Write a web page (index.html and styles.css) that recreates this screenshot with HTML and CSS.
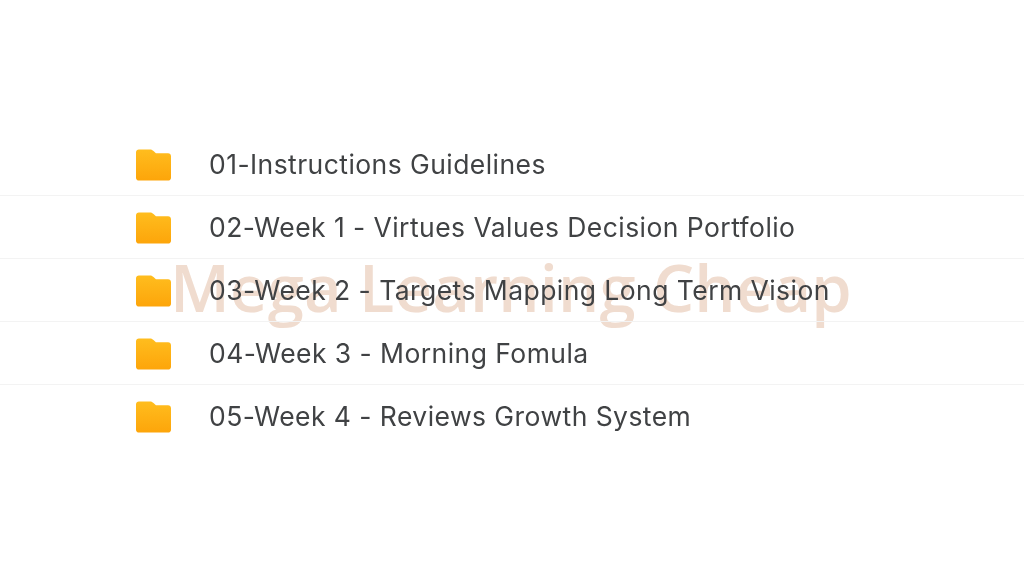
FILE: index.html
```html
<!DOCTYPE html>
<html lang="en">
<head>
<meta charset="utf-8">
<title>Folders</title>
<link rel="stylesheet" href="styles.css">
</head>
<body>
<main class="page">
  <div class="watermark">Mega Learning Cheap</div>
  <ul class="list">
    <li class="row"><svg class="folder" viewBox="0 0 36 32"><use href="#f"/></svg><span class="name">01-Instructions Guidelines</span></li>
    <li class="row"><svg class="folder" viewBox="0 0 36 32"><use href="#f"/></svg><span class="name">02-Week 1 - Virtues Values Decision Portfolio</span></li>
    <li class="row"><svg class="folder" viewBox="0 0 36 32"><use href="#f"/></svg><span class="name">03-Week 2 - Targets Mapping Long Term Vision</span></li>
    <li class="row"><svg class="folder" viewBox="0 0 36 32"><use href="#f"/></svg><span class="name">04-Week 3 - Morning Fomula</span></li>
    <li class="row"><svg class="folder" viewBox="0 0 36 32"><use href="#f"/></svg><span class="name">05-Week 4 - Reviews Growth System</span></li>
  </ul>
  <svg class="defs" width="0" height="0">
    <defs>
      <linearGradient id="g" x1="0" y1="0" x2="0" y2="1">
        <stop offset="0" stop-color="#ffbd1e"/>
        <stop offset="1" stop-color="#fda50a"/>
      </linearGradient>
      <path id="f" fill="url(#g)" d="M3 0H14.500C16 0 17 .6 18 1.600L20.500 4H33C34.700 4 36 5.300 36 7V29C36 30.700 34.700 32 33 32H3C1.300 32 0 30.700 0 29V3C0 1.300 1.300 0 3 0Z"/>
    </defs>
  </svg>
</main>
</body>
</html>
```
FILE: styles.css
```css
html, body {
  margin: 0;
  padding: 0;
  background: #fff;
}
.page {
  position: relative;
  width: 1024px;
  height: 576px;
  overflow: hidden;
  padding-top: 133px;
  box-sizing: border-box;
  font-family: Inter, "Liberation Sans", sans-serif;
}
.list {
  list-style: none;
  margin: 0;
  padding: 0;
  filter: blur(0.6px);
}
.row {
  display: flex;
  align-items: center;
  gap: 38px;
  height: 62px;
  padding-left: 136px;
  border-bottom: 1px solid #f3f3f3;
}
.row:last-child {
  border-bottom: 0;
}
.folder {
  width: 35px;
  height: 32px;
  flex: none;
  margin-top: 2px;
}
.name {
  font-size: 26.500px;
  color: #404244;
  letter-spacing: 0.44px;
  white-space: nowrap;
}
.watermark {
  position: absolute;
  left: 170px;
  top: 245px;
  font-family: "Open Sans", "Liberation Sans", sans-serif;
  font-weight: 600;
  font-size: 65px;
  letter-spacing: 0.2px;
  line-height: 84px;
  color: #f0dccf;
  white-space: nowrap;
  filter: blur(0.5px);
}
.defs {
  position: absolute;
}
```
